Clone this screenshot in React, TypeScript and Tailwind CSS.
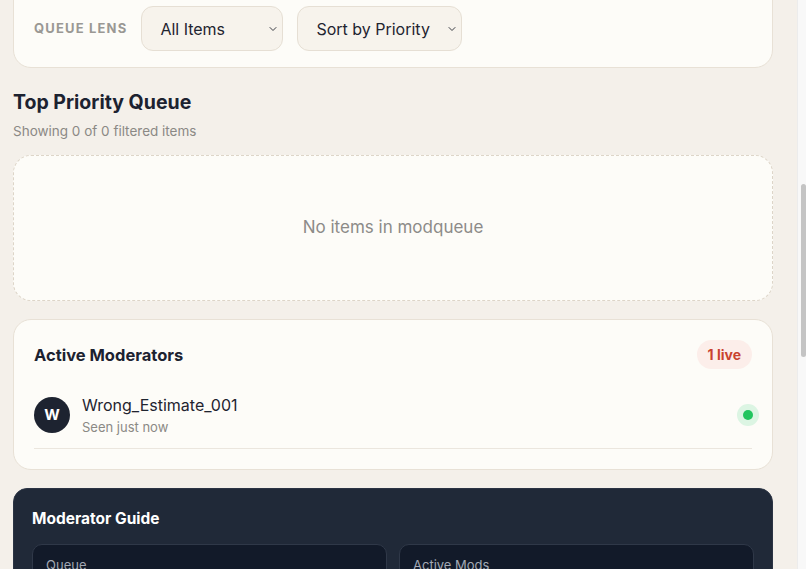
import { ChevronDown } from "lucide-react"

function LensSelect({ label, width }: { label: string; width: string }) {
  return (
    <div
      className={`${width} h-[45px] flex items-center justify-between pl-[18px] pr-[4px] rounded-[12px] border border-[#e6dfd4] bg-[#f7f3ec] text-[16px] text-[#1f2430]`}
    >
      <span>{label}</span>
      <ChevronDown className="w-[12px] h-[12px] mr-[-1px] text-[#3a3d44]" strokeWidth={2} />
    </div>
  )
}

export default function App() {
  return (
    <div className="h-[569px] overflow-hidden flex bg-[#f4f0ea] font-['Inter',sans-serif]">
      <div className="flex-1 pl-[13px] pr-[24px]">
        <div className="-mt-[20px] flex flex-col">
          {/* filter bar */}
          <div className="h-[88px] rounded-[18px] border border-[#e8e1d6] bg-[#fdfcf8] px-5 pt-[25px] flex items-start gap-[14px]">
            <span className="mt-[13px] text-[13px] font-bold tracking-[0.09em] text-[#9a9894]">QUEUE LENS</span>
            <LensSelect label="All Items" width="w-[142px]" />
            <LensSelect label="Sort by Priority" width="w-[165px]" />
          </div>

          <div className="mt-[20px]">
            <h2 className="text-[19.5px] leading-[28px] font-bold text-[#1c2230]">Top Priority Queue</h2>
            <p className="mt-[5px] text-[13.5px] leading-[20px] text-[#8b8985]">Showing 0 of 0 filtered items</p>
          </div>

          <div className="mt-[14px] h-[146px] rounded-[18px] border border-dashed border-[#ddd5c8] bg-[#fdfcf8] flex items-center justify-center">
            <span className="text-[17px] text-[#8c8b88]">No items in modqueue</span>
          </div>

          {/* active moderators */}
          <div className="mt-[18px] rounded-[18px] border border-[#e8e1d6] bg-[#fdfcf8] px-5 pt-5 pb-5">
            <div className="flex items-center justify-between">
              <h3 className="text-[16.5px] leading-[28px] font-bold text-[#1c2230]">Active Moderators</h3>
              <span className="h-[29px] px-[11px] rounded-full bg-[#fceeea] flex items-center text-[14px] font-bold text-[#c9432f]">1 live</span>
            </div>
            <div className="mt-3 pt-3 pb-[11px] border-b border-[#ebe6de] flex items-center">
              <div className="w-9 h-9 rounded-full bg-[#1d2330] flex items-center justify-center text-white text-[15px] font-bold">W</div>
              <div className="ml-3 flex-1">
                <div className="text-[16px] leading-[24px] text-[#1f2430]">Wrong_Estimate_001</div>
                <div className="text-[13px] leading-[20px] text-[#8b8985]">Seen just now</div>
              </div>
              <div className="mr-[-1px] w-[10px] h-[10px] rounded-full bg-[#22c55e] ring-[6px] ring-[#dcf5e3]" />
            </div>
          </div>

          {/* guide */}
          <div className="mt-[18px] rounded-[14px] bg-[#202938] border border-[#2b3444] px-[18px] pt-[18px] pb-5">
            <h3 className="text-[15.5px] leading-[24px] font-bold text-white">Moderator Guide</h3>
            <div className="mt-[13px] grid grid-cols-2 gap-3">
              <div className="h-[80px] rounded-[10px] bg-[#121a29] border border-[#2f3848] px-[13px] pt-[11px] text-[13px] text-[#a3a9b4]">Queue</div>
              <div className="h-[80px] rounded-[10px] bg-[#121a29] border border-[#2f3848] px-[13px] pt-[11px] text-[13px] text-[#a3a9b4]">Active Mods</div>
            </div>
          </div>
        </div>
      </div>

      {/* scrollbar */}
      <div className="w-[9px] bg-[#f8f8f8] border-l border-[#ececec] pt-[184px]">
        <div className="ml-[3px] w-[5px] h-[173px] rounded-full bg-[#c4c4c4]" />
      </div>
    </div>
  )
}
